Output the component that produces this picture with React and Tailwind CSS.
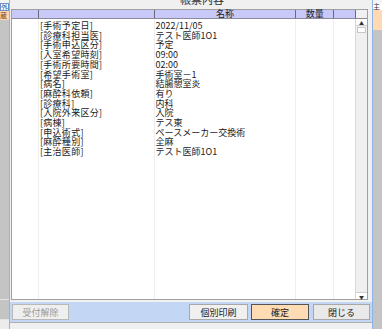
import React from 'react';

const ROWS = [
  ['[手術予定日]', '2022/11/05'],
  ['[診療科担当医]', 'テスト医師1O1'],
  ['[手術申込区分]', '予定'],
  ['[入室希望時刻]', '09:00'],
  ['[手術所要時間]', '02:00'],
  ['[希望手術室]', '手術室－1'],
  ['[病名]', '結腸憩室炎'],
  ['[麻酔科依頼]', '有り'],
  ['[診療科]', '内科'],
  ['[入院外来区分]', '入院'],
  ['[病棟]', 'テス東'],
  ['[申込術式]', 'ペースメーカー交換術'],
  ['[麻酔種別]', '全麻'],
  ['[主治医師]', 'テスト医師1O1'],
];

const font = { fontFamily: '"Noto Sans CJK JP", "MS UI Gothic", sans-serif' };

function Btn({ label, className }) {
  return (
    <div className={`flex h-[16px] items-center justify-center text-[9px] leading-none ${className}`}>
      {label}
    </div>
  );
}

export default function App() {
  return (
    <div className="flex h-[329px] w-[382px] overflow-hidden bg-[#f0f0f0] text-[#1a1a1a]" style={font}>
      {/* left strip (window behind) */}
      <div className="flex w-[9px] flex-col bg-[#c4c4c4]">
        <div className="h-[3px] bg-[#f4f4f4]" />
        <div className="h-[8px] overflow-hidden border border-[#6e8fc8] bg-white text-[7px] leading-[7px] text-[#2050a0]">外</div>
        <div className="h-[9px] overflow-hidden bg-[#ffd9b4] text-[7px] leading-[9px] text-[#7a4a20]">蔵</div>
        <div className="flex-1" />
        <div className="h-[1px] bg-[#e4e4e4]" />
        <div className="h-[19px]" />
        <div className="h-[1px] bg-[#e4e4e4]" />
        <div className="h-[9px] bg-[#ececec]" />
      </div>
      <div className="w-[1px] bg-[#8fb4e6]" />

      {/* dialog */}
      <div className="flex w-[362px] flex-col bg-[#f0f0f0]">
        <div className="flex h-[9px] items-end justify-center overflow-hidden">
          <span className="mb-[4px] pl-[22px] text-[11px] leading-none text-[#333]">帳票内容</span>
        </div>

        <div className="ml-[1px] mr-[4px] flex flex-1 flex-col border border-[#a0a0a0] bg-white">
          {/* header */}
          <div className="flex h-[9px] border-b border-[#8a8a9a] bg-[#c9c9f9] text-[9px] leading-[8px]">
            <div className="w-[27px] border-r border-[#6a6a7a]" />
            <div className="w-[116px] border-r border-[#6a6a7a]" />
            <div className="w-[142px] border-r border-[#6a6a7a] text-center">名称</div>
            <div className="w-[38px] border-r border-[#6a6a7a] text-center">数量</div>
            <div className="w-[22px] border-r border-[#6a6a7a]" />
            <div className="w-[11px] bg-[#f0f0f0]" />
          </div>
          {/* body */}
          <div className="flex flex-1 text-[9px] leading-[9.7px]">
            <div className="w-[27px] border-r border-[#eeeeee]" />
            <div className="w-[116px] border-r border-[#eeeeee] pl-[1px] pt-[2px] tracking-[0.3px]">
              {ROWS.map((r) => (
                <div key={r[0]} className="whitespace-nowrap">{r[0]}</div>
              ))}
            </div>
            <div className="w-[142px] border-r border-[#eeeeee] pl-[1px] pt-[2px]">
              {ROWS.map((r) => (
                <div key={r[0]} className="whitespace-nowrap">{r[1]}</div>
              ))}
            </div>
            <div className="w-[38px] border-r border-[#eeeeee]" />
            <div className="w-[22px] border-r border-[#d8d8d8]" />
            {/* scrollbar */}
            <div className="flex w-[11px] flex-col bg-[#f0f0f0]">
              <div className="flex h-[7px] items-center justify-center border-b border-[#d0d0d0] bg-white text-[5px] leading-none text-[#333]">▲</div>
              <div className="mx-[1px] mt-[1px] h-[6px] border border-[#c8c8c8] bg-white" />
              <div className="flex-1" />
              <div className="flex h-[7px] items-center justify-center border-t border-[#d0d0d0] bg-white text-[5px] leading-none text-[#333]">▼</div>
            </div>
          </div>
        </div>

        <div className="mt-[2px] flex h-[20px] items-center bg-[#c3d6f3] pl-[2px] pr-[2px]">
          <Btn label="受付解除" className="w-[57px] border border-[#b8b8b8] bg-[#efefef] text-[#9a9a9a]" />
          <div className="flex-1" />
          <Btn label="個別印刷" className="w-[59px] border border-[#a8a8a8] bg-[#f0f0f0]" />
          <Btn label="確定" className="ml-[3px] w-[58px] border border-[#555555] bg-[#ffdcb4]" />
          <Btn label="閉じる" className="ml-[4px] w-[57px] border border-[#a8a8a8] bg-[#e9e9e9]" />
        </div>
        <div className="h-[1px] bg-[#b0b0b0]" />
        <div className="h-[6px] bg-[#f0f0f0]" />
      </div>

      <div className="w-[1px] bg-[#8fb4e6]" />
      {/* right strip */}
      <div className="flex flex-1 flex-col bg-[#c4c4c4]">
        <div className="h-[3px] bg-[#f4f4f4]" />
        <div className="h-[7px] bg-white text-[7px] leading-[7px] text-[#333]">主</div>
        <div className="h-[20px] bg-[#ffd9b4]" />
        <div className="flex-1" />
      </div>
    </div>
  );
}
